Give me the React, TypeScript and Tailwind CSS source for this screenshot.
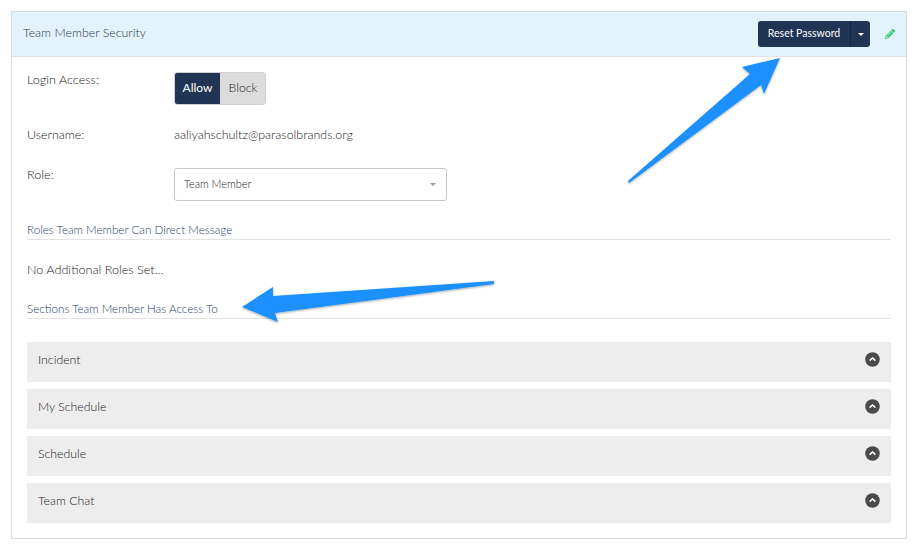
import { FaPencilAlt } from "react-icons/fa"

const sections = ["Incident", "My Schedule", "Schedule", "Team Chat"]

function ChevronCircle() {
  return (
    <svg className="mb-[6px]" width="15" height="15" viewBox="0 0 15 15">
      <circle cx="7.5" cy="7.5" r="7.25" fill="#4a4a4a" />
      <path d="M4.6 8.6 7.5 5.9l2.9 2.7" fill="none" stroke="#fff" strokeWidth="1.5" />
    </svg>
  )
}

function SectionTitle({ title }: { title: string }) {
  return (
    <div className="border-b border-[#e3e3e3] pb-[2px] text-[11.65px] leading-[15px] text-[#24406a]">{title}</div>
  )
}

export default function App() {
  return (
    <div className="relative h-[549px] w-[918px] overflow-hidden bg-white pl-[11px] pt-[11px] font-['Lato',sans-serif] font-light text-[#222]">
      <div className="h-[528px] w-[896px] border border-[#dadada]">
        {/* Header */}
        <div className="flex h-[45px] items-center border-b border-[#dfe3e5] bg-[#e2f3fb] pl-[11px] pr-[11px]">
          <span className="mb-[1px] text-[12.4px] text-[#2c3a48]">Team Member Security</span>
          <div className="ml-auto flex h-[26px] overflow-hidden rounded-[3px] bg-[#203554] font-normal text-white">
            <div className="flex w-[92px] items-center justify-center text-[10.5px]">Reset Password</div>
            <div className="flex w-[20px] items-center justify-center border-l border-[#15263f]">
              <div className="h-0 w-0 border-x-[3px] border-t-[3px] border-x-transparent border-t-white" />
            </div>
          </div>
          <FaPencilAlt className="ml-[15px] text-[10px] text-[#2ecc71]" />
        </div>

        {/* Form */}
        <div className="px-[15px]">
          <div className="flex pt-[15px]">
            <div className="w-[147px] text-[12.6px] leading-[16px]">Login Access:</div>
            <div className="flex h-[33px] overflow-hidden rounded-[3px] border border-[#d0d0d0] text-[12px] font-normal">
              <div className="flex w-[45px] items-center justify-center bg-[#203554] pb-[1px] text-white">Allow</div>
              <div className="flex w-[45px] items-center justify-center bg-[#dcdcdc] pl-[1px] text-[12.3px] font-light text-[#222]">Block</div>
            </div>
          </div>

          <div className="mt-[22px] flex text-[12.45px] leading-[16px]">
            <div className="w-[147px]">Username:</div>
            <div>aaliyahschultz@parasolbrands.org</div>
          </div>

          <div className="mt-[23px] flex">
            <div className="w-[147px] pt-[1px] text-[12.6px] leading-[16px]">Role:</div>
            <div className="mt-[2px] flex h-[33px] w-[273px] items-center justify-between rounded-[3px] border border-[#c8c8c8] pl-[9px] pr-[10px] text-[10.9px] text-[#222]">
              Team Member
              <div className="h-0 w-0 border-x-[3px] border-t-[3px] border-x-transparent border-t-[#999]" />
            </div>
          </div>

          <div className="mt-[21px]">
            <SectionTitle title="Roles Team Member Can Direct Message" />
          </div>

          <div className="mt-[22px] text-[12.6px] leading-[16px]">No Additional Roles Set...</div>

          <div className="mt-[23px]">
            <SectionTitle title="Sections Team Member Has Access To" />
          </div>

          {/* Sections */}
          <div className="mt-[23px] flex flex-col gap-[7px]">
            {sections.map((s) => (
              <div key={s} className="flex h-[40px] items-center justify-between bg-[#ededed] pl-[11px] pr-[11px] text-[12.3px]">
                <span className="mb-[4px]">{s}</span>
                <ChevronCircle />
              </div>
            ))}
          </div>
        </div>
      </div>

      {/* Annotation arrows */}
      <svg className="absolute inset-0" width="918" height="549" viewBox="0 0 918 549">
        <defs>
          <filter id="arrowShadow" x="-10%" y="-10%" width="120%" height="130%">
            <feDropShadow dx="0" dy="1" stdDeviation="1" floodColor="#000" floodOpacity="0.35" />
          </filter>
        </defs>
        <g fill="#1e90ff" filter="url(#arrowShadow)">
          <path d="M628 181 750 74 742 67 780 58 764 94 761 85 629 183Z" />
          <path d="M494 281 273 296 273 287 242 307 278 322 275 313 494 284Z" />
        </g>
      </svg>
    </div>
  )
}
